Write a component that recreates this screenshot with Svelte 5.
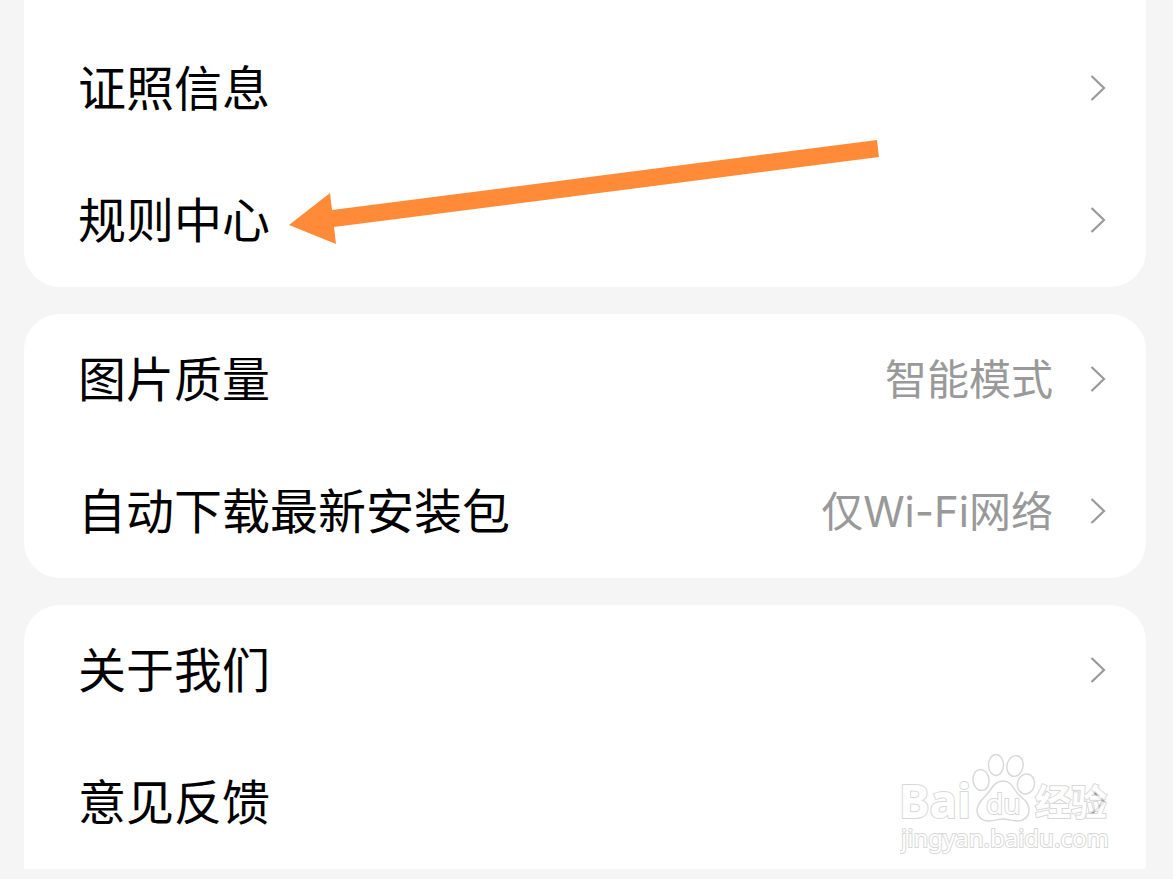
<script lang="ts">
	interface Item {
		label: string;
		value?: string;
		href: string;
		marked?: boolean;
	}

	const groups: Item[][] = [
		[
			{ label: '证照信息', href: '#license' },
			{ label: '规则中心', href: '#rules', marked: true }
		],
		[
			{ label: '图片质量', value: '智能模式', href: '#image-quality' },
			{ label: '自动下载最新安装包', value: '仅Wi-Fi网络', href: '#auto-download' }
		],
		[
			{ label: '关于我们', href: '#about' },
			{ label: '意见反馈', href: '#feedback' }
		]
	];
</script>

<main class="settings">
	{#each groups as group}
		<ul class="card">
			{#each group as item}
				<li class="row">
					<a class="row__link" href={item.href}>
						<span class="row__label">{item.label}</span>
						{#if item.value}
							<span class="row__value">{item.value}</span>
						{/if}
						<svg class="row__chevron" viewBox="0 0 16 28" aria-hidden="true">
							<path d="M1.5 1 L14 13 L1.5 25" />
						</svg>
					</a>
					{#if item.marked}
						<svg class="row__arrow" viewBox="0 0 592 106" aria-hidden="true">
							<path d="M0 86 L41 54 L43 71 L588 1 L590 18 L45 88 L47 105 Z" />
						</svg>
					{/if}
				</li>
			{/each}
		</ul>
	{/each}

	<svg class="watermark" viewBox="0 0 216 106" aria-hidden="true">
		<text class="brand" x="-1" y="68">Bai</text>
		<g class="paw">
			<ellipse cx="81" cy="30" rx="8" ry="10.5" transform="rotate(-8 81 30)" />
			<ellipse cx="96" cy="15" rx="7.5" ry="10.5" />
			<ellipse cx="115" cy="16" rx="8" ry="10.5" transform="rotate(12 115 16)" />
			<ellipse cx="126" cy="34" rx="8.5" ry="10" transform="rotate(14 126 34)" />
			<path
				d="M103 31 C111 31 113 38 118 44 C123 49 129 52 129 60 C129 67 124 71 117 71 C111 71 108 69 103 69 C98 69 95 71 89 71 C81 71 77 66 77 60 C77 53 83 49 88 43 C93 37 95 31 103 31 Z"
			/>
		</g>
		<text class="du" x="86" y="64">du</text>
		<text class="cjk" x="135" y="66">经验</text>
		<text class="site" x="1" y="97">jingyan.baidu.com</text>
	</svg>
</main>

<style>
	:global(body) {
		background: #f5f5f5;
	}

	.settings {
		position: relative;
		display: flex;
		flex-direction: column;
		gap: 27px;
		padding: 0 27px 10px 24px;
		font-family: 'Noto Sans CJK SC', sans-serif;
	}

	.card {
		margin: 0;
		padding: 0;
		list-style: none;
		background: #fff;
		border-radius: 36px;
	}
	.card:first-child {
		padding-top: 23px;
		border-top-left-radius: 0;
		border-top-right-radius: 0;
	}
	.card:nth-child(3) {
		border-bottom-left-radius: 0;
		border-bottom-right-radius: 4px;
	}

	.row {
		position: relative;
	}
	.row__link {
		display: flex;
		align-items: center;
		height: 132px;
		padding: 0 40px 0 54px;
		color: #000;
		text-decoration: none;
	}
	.row__label,
	.row__value {
		line-height: 72px;
	}
	.row__label {
		padding-bottom: 8px;
		font-size: 48px;
	}
	.row__value {
		margin-left: auto;
		font-family: Inter, 'Noto Sans CJK SC', sans-serif;
		font-size: 42px;
		color: #999;
	}
	.row__chevron {
		width: 16px;
		height: 28px;
		margin-left: auto;
		fill: none;
		stroke: #999;
		stroke-width: 2.2;
	}
	.row__value + .row__chevron {
		margin-left: 37px;
	}

	.row__arrow {
		position: absolute;
		left: 265px;
		top: -16px;
		width: 592px;
		height: 106px;
		fill: #ff8b38;
		pointer-events: none;
	}

	.watermark {
		position: absolute;
		right: 57px;
		bottom: 23px;
		width: 216px;
		height: 106px;
		fill: #fff;
		stroke: #cfcfcf;
		stroke-width: 1.6;
		paint-order: stroke;
		opacity: 0.8;
		pointer-events: none;
	}
	.watermark .paw {
		paint-order: normal;
		stroke-width: 1.4;
	}
	.watermark text {
		stroke-width: 2;
	}
	.watermark .brand {
		font: bold 46px 'Noto Sans', sans-serif;
	}
	.watermark .du {
		font: 28px 'Noto Sans', sans-serif;
	}
	.watermark .cjk {
		font: bold 36px 'Noto Sans CJK SC', sans-serif;
	}
	.watermark .site {
		font: 24px 'Noto Sans', sans-serif;
	}
</style>
